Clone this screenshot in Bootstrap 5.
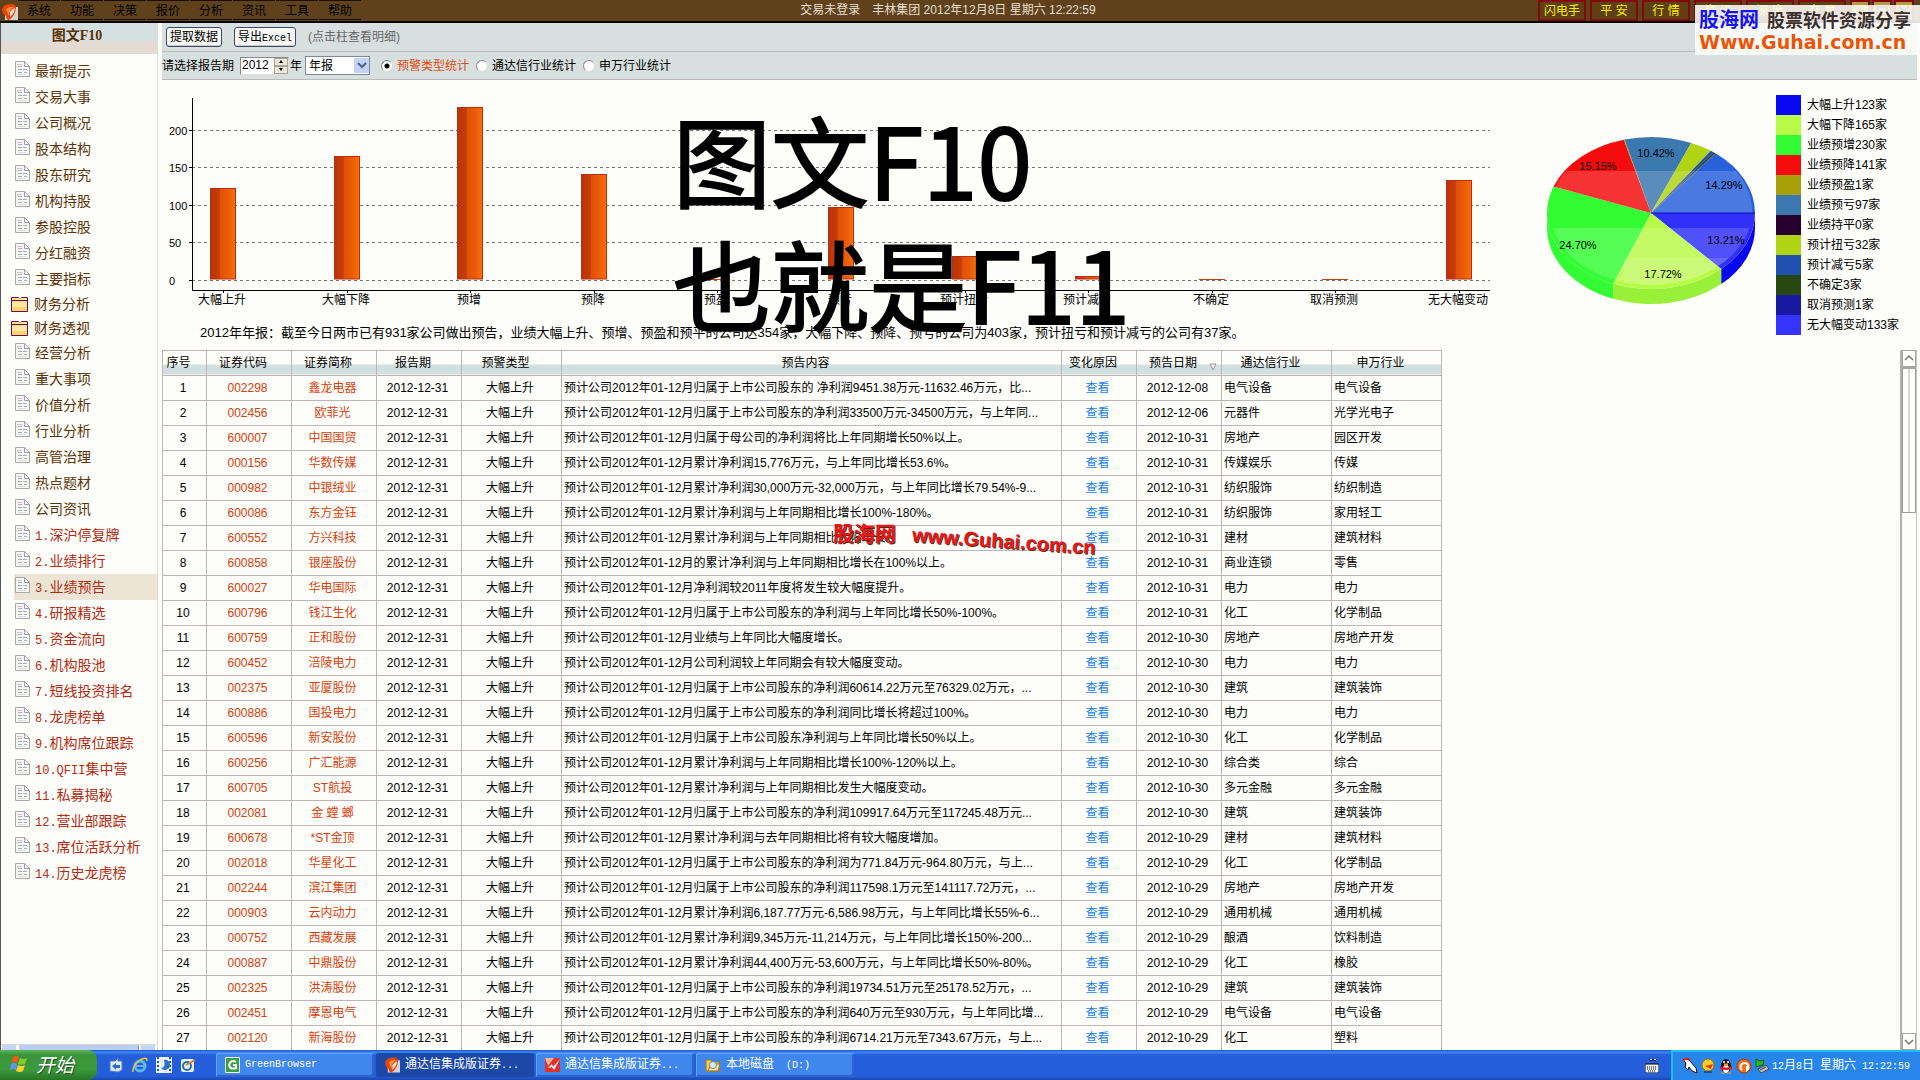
<!DOCTYPE html>
<html lang="zh-CN">
<head>
<meta charset="utf-8">
<meta name="viewport" content="width=device-width, initial-scale=1">
<title>图文F10</title>
<link href="https://cdn.jsdelivr.net/npm/bootstrap@5.3.0/dist/css/bootstrap.min.css" rel="stylesheet">
<style>
:root{--paper:#fdfdf9;--rule:#bfb4b4;--bar:#d7e0de;--brown:#5c3408;--link:#d8400c}
body{font:12px/16px "Liberation Sans","Noto Sans CJK SC",sans-serif;color:#000;background:var(--paper);height:100vh;overflow:hidden}
a{text-decoration:none}
.mono{font-family:"Liberation Mono",monospace;font-size:10px}
/* title bar */
.titlebar{height:23px;background:#5f421c;border-bottom:2px solid #05050c;position:relative;flex:none}
.menu-item{color:#000;border-top:1px solid #1a0e02;border-bottom:1px solid #1a0e02;width:42px;margin-right:1px;height:20px;line-height:20px;text-align:center}
.clockline{color:#e8dfd2;left:0;right:0;top:0;line-height:20px;padding-right:24px}
.tbtn{width:48px;height:21px;border:2px solid #84080a;background:#5f3f14;color:#f8f000;padding:0;line-height:16px;font-size:12px}
.wbtns{gap:2px;margin-right:6px}
.wbtn{width:20px;height:21px;border:2px solid #84080a;background:#b99a3c;padding:0}
/* sidebar */
.side{width:158px;border-left:1px solid #555;border-right:1px solid #e0dcd6;flex:none}
.side-head{height:31px;background:linear-gradient(#d5e0e0 0 18px,#e4dbd5 18px);font:bold 14px/25px "Liberation Serif","Noto Sans CJK SC",serif;color:#5c3000;padding-right:4px}
.nav-row{height:26px;padding-left:14px;gap:4px;color:var(--brown);font-size:14px;line-height:20px}
.nav-row svg{margin-bottom:4px;flex:none}
.nav-row.fold{height:24px;padding-left:10px;gap:6px}
.nav-row.fold svg{margin-bottom:0}
.nav-row.pick{color:#b42a12;padding-top:1px}
.nav-row.pick .mono{font-size:12px}
.nav-row.on{background:#ece5d5;margin-left:13px;padding-left:1px}
.hscroll{height:6px;border-top:1px solid #ddd6cc;margin-right:1px;padding:0 1px}
.hs-btn{width:14px;height:5px;background:#c5d5f8}
.hs-thumb{width:120px;height:5px;background:#b9cdfa;border-right:1px solid #7f97d0}
/* tool rows */
.pane{margin-left:4px;margin-right:3px;min-width:0}
.tool{background:var(--bar);border-bottom:1px solid #b9b9b6}
.tool-a{height:29px;gap:12px;padding-top:1px}
.tool-b{height:28px;padding-top:1px}
.xp{height:20px;border:1px solid #3c4a64;border-radius:3px;background:#f7f8f6;padding:0 3px;line-height:18px;box-shadow:inset 0 -1px 0 #c9c9c9;color:#000}
.spin{width:49px;height:18px;margin:0 1px 0 6px;border:1px solid #888;border-bottom-color:#ddd;border-right-color:#ddd;background:#fff}
.spin input{width:33px;border:0;padding:0 0 0 1px;height:14px;font-size:12px;background:none;appearance:textfield;-moz-appearance:textfield}
.spin input::-webkit-inner-spin-button{display:none}
.spin button{height:8px;width:14px;padding:0;border:1px solid #a8a598;background:#ece9d8;line-height:0;display:flex;align-items:center;justify-content:center}
.pick-year{position:relative;width:65px;height:19px;margin-right:4px}
.pick-year select{appearance:none;width:65px;height:19px;border:1px solid #7d8898;background:#fff;font-size:12px;line-height:16px;padding:0 3px;border-radius:0}
.pick-year svg{position:absolute;right:1px;top:2px;pointer-events:none}
.rad{appearance:none;width:12px;height:12px;border-radius:50%;border:1px solid #8c8c88;background:#fff;margin:0 4px 0 7px;border-right-color:#ddd;border-bottom-color:#ddd}
.rad:checked{background:radial-gradient(circle,#000 0 2px,#fff 3px)}
/* charts */
.charts{height:270px;position:relative}
.summary{font-size:13px;line-height:26px;padding-left:38px;white-space:nowrap}
.pie{width:220px;margin-left:46px;margin-top:46px;flex:none}
.legend{list-style:none;margin:15px 0 0 10px;padding:0}
.legend li{height:20px;gap:6px;white-space:nowrap}
.legend i{width:25px;height:20px}
.slogan{position:absolute;left:511px;top:15px;font:400 98px/124px "Noto Sans CJK SC",sans-serif;-webkit-text-stroke:2px #000;pointer-events:none;white-space:nowrap}
svg text{font-family:"Liberation Sans","Noto Sans CJK SC",sans-serif}
/* table */
.grid{table-layout:fixed;width:1280px;border-collapse:collapse;flex:none;align-self:flex-start}
.grid th,.grid td{border:1px solid var(--rule);padding:0 3px 0 2px;height:25px;line-height:18px;overflow:hidden;white-space:nowrap;font-weight:400}
.grid th{text-align:center;padding-right:14px;background:linear-gradient(transparent 0 14px,#d3e0e0 14px);line-height:16px;overflow:visible}
.grid td.c{text-align:center;padding-right:5px}
.grid .red{color:var(--link)}
.grid .look{color:#1c82e6}
.vscroll{width:17px;border-left:2px solid #b5b0b0;border-right:1px solid #c9c4c4}
.vscroll button{height:17px;border:1px solid #a5a5a5;background:var(--paper);padding:0;line-height:0;width:100%}
.vthumb{height:146px;border:1px solid #9c9e9e;border-top:2px solid #a5a5a5}
.vthumb::before{content:"";display:block;width:2px;height:100%;margin:0 auto;background:#d5dad8}
/* watermarks */
.stamp{position:absolute;right:0;top:5px;width:225px;height:50px;background:rgba(253,253,250,.88);z-index:5;padding:2px 0 0 4px}
.stamp .cn1{font:bold 20px/24px "Noto Sans CJK SC",sans-serif;color:#1414f0}
.stamp .cn2{font:bold 18px/24px "Noto Sans CJK SC",sans-serif;color:#3a2f2c}
.stamp .url{font:bold 19px/22px "DejaVu Sans",sans-serif;color:#ec5408;white-space:nowrap}
.mark2{position:absolute;left:833px;top:521px;color:#f01414;text-shadow:1px 1px 0 #432;font:bold 21px/26px "Liberation Sans","Noto Sans CJK SC",sans-serif;white-space:nowrap;z-index:4;pointer-events:none}
.mark2 .w{transform:rotate(4deg);margin:7px 0 0 16px;font-size:20px}
/* taskbar */
.taskbar{height:30px;flex:none;background:linear-gradient(#2460d8 0 1px,#3f8cf0 2px,#245edb 5px,#245edb 26px,#1b48b0);color:#fff;position:relative;z-index:6}
.start{width:97px;height:30px;border:0;border-radius:0 9px 9px 0;background:linear-gradient(#5cb45c,#3a943a 5px,#3b9a3b 20px,#267526);color:#fff;font:italic 19px/26px "Noto Sans CJK SC",sans-serif;padding:0 0 2px 10px;gap:8px;text-shadow:1px 1px 1px #1c4a1c}
.quick{gap:8px;margin-left:11px;width:108px}
.task{width:158px;height:24px;margin:3px 2px 0 0;border:0;border-radius:2px;background:#3f87ee;color:#fff;padding:0 9px;gap:5px;text-align:left;box-shadow:inset 1px 1px 0 #66a4f8,inset -2px -2px 1px #2e62cc;line-height:20px;font-size:12px;white-space:nowrap}
.task.on{background:#1c48a8;box-shadow:none}
.tray{width:249px;background:#2886ea;border-left:2px solid #1ec0f4;border-top:2px solid #1ec0f4;padding-left:9px;gap:2px}
</style>
<script src="https://cdn.jsdelivr.net/npm/bootstrap@5.3.0/dist/js/bootstrap.bundle.min.js"></script>
</head>
<body class="d-flex flex-column">
<svg width="0" height="0" class="position-absolute" aria-hidden="true">
  <symbol id="doc" viewBox="0 0 16 17"><path d="M.5.5h9l5 5v10H.5z" fill="#f6f6f4" stroke="#a8a8a6"/><path d="M9.500.5v5h5" fill="none" stroke="#9d9db8"/><path d="M3 5.500h4M3 8.500h4M8 8.500h4M3 11.500h4M9 11.500h3" stroke="#a4aeb0" fill="none"/><path d="M2 3.500h5" stroke="#dcbcbc"/><path d="M3 13.500h8" stroke="#d8e4e4"/></symbol>
  <symbol id="folder" viewBox="0 0 17 16"><path d="M.5 1.500h7l1 1h1l1-1h6v14H.5z" fill="#f7d866" stroke="#6c0a62"/><path d="M1 4.500h15" stroke="#6c0a62"/><path d="M1 3h15" stroke="#fff6c0"/><path d="M1 6h15v5H1z" fill="#fbe9a0"/></symbol>
  <symbol id="tdx" viewBox="0 0 16 16"><rect x="3" y="3" width="13" height="13" fill="#d9d5cf"/><path d="M0 5Q2 0 9 0q5 0 5 4-1 8-7 12-3 0-3-4Q0 10 0 5z" fill="#e8440e"/><path d="M4 5q4-3 8-2-5 2-5 9-2-4-3-7z" fill="#ff9038"/><path d="M8 8q2-3 5-4-1 6-5 9z" fill="#fff" opacity=".85"/></symbol>
</svg>

<header class="titlebar d-flex">
  <div class="d-flex pt-1" style="padding-left:2px"><svg width="16" height="16"><use href="#tdx"/></svg></div>
  <nav class="d-flex" id="menu"></nav>
  <div class="clockline position-absolute text-center">交易未登录&emsp;丰林集团 2012年12月8日 星期六 12:22:59</div>
  <div class="d-flex gap-1 ms-auto position-relative" id="topbtns"></div>
</header>
<aside class="stamp">
  <div class="d-flex gap-2"><span class="cn1">股海网</span><span class="cn2">股票软件资源分享</span></div>
  <div class="url">Www.Guhai.com.cn</div>
</aside>

<div class="d-flex flex-fill" style="min-height:0">
  <aside class="side d-flex flex-column">
    <div class="side-head text-center">图文F10</div>
    <nav id="side" class="pt-1"></nav>
    <div class="hscroll d-flex mt-auto justify-content-between"><span class="hs-btn"></span><span class="hs-thumb"></span><span class="hs-btn"></span></div>
  </aside>

  <main class="pane flex-fill d-flex flex-column">
    <div class="tool tool-a d-flex align-items-center px-1">
      <button type="button" class="xp">提取数据</button>
      <button type="button" class="xp">导出<span class="mono">Excel</span></button>
      <span style="color:#666">(点击柱查看明细)</span>
    </div>
    <form class="tool tool-b d-flex align-items-center">
      <label for="yr">请选择报告期</label>
      <span class="spin d-flex"><input id="yr" type="number" value="2012"><span><button type="button" aria-label="增加"><svg width="4" height="3"><path d="M0 3 2 0l2 3z"/></svg></button><button type="button" aria-label="减少"><svg width="4" height="3"><path d="M0 0l2 3 2-3z"/></svg></button></span></span>
      <label for="kind" style="margin-right:3px">年</label>
      <span class="pick-year"><select id="kind"><option>年报</option></select><svg width="15" height="15"><rect width="15" height="15" rx="1" fill="#c2d3fa"/><path d="M4 5l4 4 4-4" fill="none" stroke="#4d6185" stroke-width="2"/></svg></span>
      <input class="rad" type="radio" name="s" id="r1" checked><label for="r1" style="color:#e04a10">预警类型统计</label>
      <input class="rad" type="radio" name="s" id="r2"><label for="r2">通达信行业统计</label>
      <input class="rad" type="radio" name="s" id="r3"><label for="r3">申万行业统计</label>
    </form>

    <section class="charts d-flex flex-shrink-0">
      <div>
        <svg id="bars" width="1338" height="240" class="d-block" font-size="12"></svg>
        <div class="summary">2012年年报：截至今日两市已有931家公司做出预告，业绩大幅上升、预增、预盈和预平的公司达354家，大幅下降、预降、预亏的公司为403家，预计扭亏和预计减亏的公司有37家。</div>
      </div>
      <svg id="pie" class="pie" width="220" height="190" font-size="11" text-anchor="middle"></svg>
      <ul class="legend" id="legend"></ul>
      <div class="slogan">图文F10<br>也就是F11</div>
    </section>

    <section class="d-flex flex-fill justify-content-between overflow-hidden" style="min-height:0">
      <table class="grid">
        <colgroup><col style="width:44px"><col style="width:85px"><col style="width:85px"><col style="width:85px"><col style="width:100px"><col style="width:500px"><col style="width:75px"><col style="width:85px"><col style="width:110px"><col style="width:110px"></colgroup>
        <thead><tr><th>序号</th><th>证券代码</th><th>证券简称</th><th>报告期</th><th>预警类型</th><th>预告内容</th><th>变化原因</th><th class="position-relative">预告日期<svg class="position-absolute end-0 bottom-0 mb-1 me-1" width="8" height="8"><path d="M1 1h6L4 7z" fill="#eee" stroke="#999"/></svg></th><th>通达信行业</th><th>申万行业</th></tr></thead>
        <tbody id="rows"></tbody>
      </table>
      <div class="vscroll d-flex flex-column">
        <button type="button" aria-label="向上"><svg width="10" height="8"><path d="M1 6l4-4 4 4" fill="none" stroke="#777" stroke-width="1.5"/></svg></button>
        <div class="vthumb"></div>
        <button type="button" class="mt-auto" aria-label="向下"><svg width="10" height="8"><path d="M1 2l4 4 4-4" fill="none" stroke="#777" stroke-width="1.5"/></svg></button>
      </div>
    </section>
  </main>
</div>
<div class="mark2 d-flex"><span>股海网</span><span class="w">www.Guhai.com.cn</span></div>

<footer class="taskbar d-flex">
  <button type="button" class="start d-flex align-items-center"><svg width="18" height="18" viewBox="0 0 18 18"><path d="M3 2q3-2 6 0L7 8Q4 6 1 8z" fill="#f0581c"/><path d="M10 3q3 2 7 0l-2 6q-4 1-7 0z" fill="#84cc2c"/><path d="M1 9q3-2 6 0l-1 6q-3-2-6 0z" fill="#5a94f4"/><path d="M8 10q4 2 7 0l-2 6q-3 2-7 0z" fill="#fcd02c"/></svg>开始</button>
  <div class="quick d-flex align-items-center">
    <svg width="16" height="16"><path d="M2 4h5l3-3v3h4v9l-4 2-8-1z" fill="#dce9f8" stroke="#4f7fb8"/><path d="M4 9l4-3v2h4v3H8v2z" fill="#2f6cc0"/></svg>
    <svg width="16" height="16"><circle cx="8" cy="9" r="5" fill="none" stroke="#5cb8f8" stroke-width="3"/><path d="M4 9h9" stroke="#5cb8f8" stroke-width="2"/><path d="M1 15Q0 9 8 3q7-4 7 1" fill="none" stroke="#f4c430" stroke-width="1.5"/></svg>
    <svg width="16" height="16"><rect width="16" height="16" fill="#e8f0fa"/><path d="M2 0v16M14 0v16" stroke="#27549c" stroke-width="2" stroke-dasharray="2 2"/><path d="M8 3a5 5 0 1 1-3 8q5 0 3-8z" fill="#2d70cc"/></svg>
    <svg width="16" height="16"><rect x="1" y="2" width="13" height="13" rx="2" fill="#e8f2fb"/><circle cx="7" cy="9" r="4" fill="none" stroke="#2470b8" stroke-width="2"/><path d="M6 8l9-5" stroke="#e87820" stroke-width="2"/></svg>
  </div>
  <button type="button" class="task d-flex align-items-center"><svg width="15" height="16"><rect width="15" height="16" rx="1" fill="#eef8ee"/><rect x="1" y="1" width="13" height="14" fill="#3ca048"/><path d="M11 5Q6 2 4 8q1 5 7 3V8H8" fill="none" stroke="#fff" stroke-width="2"/></svg><span class="mono">GreenBrowser</span></button>
  <button type="button" class="task on d-flex align-items-center"><svg width="15" height="16"><use href="#tdx"/></svg><span>通达信集成版证券<span class="mono">...</span></span></button>
  <button type="button" class="task d-flex align-items-center"><svg width="15" height="16"><rect y="1" width="15" height="14" fill="#e03028"/><path d="M0 1h9L3 9z" fill="#ffb0a0"/><path d="M3 11l4-4 1 3 7-8-6 11-2-3z" fill="#fff"/></svg><span>通达信集成版证券<span class="mono">...</span></span></button>
  <button type="button" class="task d-flex align-items-center"><svg width="16" height="16"><path d="M1 3h5l1 2h7v9H1z" fill="#f4cc50" stroke="#a07818"/><path d="M3 14l3-7h9l-2 7z" fill="#fbe48c" stroke="#a07818"/><circle cx="8" cy="8" r="3.5" fill="#d8ecfa" stroke="#789"/></svg><span>本地磁盘<span class="mono">&nbsp; (D:)</span></span></button>
  <div class="ms-auto d-flex align-items-center" style="padding-right:12px"><svg width="14" height="15"><path d="M4 1l2 2 2-2 2 2 2-2M0 6h14v9H0z" fill="#eee" stroke="#000"/><path d="M2 9h10M2 11h10M3 13h8" stroke="#000" stroke-dasharray="1 1"/></svg></div>
  <div class="tray d-flex align-items-center">
    <svg width="16" height="16"><path d="M1 2q3-3 6 0l7 8 1 5-5-2-3-4-1 3-3-3 1-4z" fill="#fff" stroke="#111"/><path d="M1 3Q4-1 8 2" fill="none" stroke="#e01818" stroke-width="2"/></svg>
    <svg width="16" height="16"><circle cx="8" cy="7" r="6" fill="#fcd02c" stroke="#a86808"/><path d="M5 8l8-2-2 5z" fill="#e83a10"/><path d="M4 14h8" stroke="#1850a0" stroke-width="2"/></svg>
    <svg width="16" height="16"><ellipse cx="8" cy="8" rx="5" ry="7" fill="#181818"/><ellipse cx="8" cy="11" rx="3" ry="4" fill="#fff"/><path d="M2 8q6 3 12 0v3q-6 2-12 0z" fill="#e01818"/><circle cx="6" cy="4" r="1" fill="#fff"/><circle cx="10" cy="4" r="1" fill="#fff"/><path d="M6 6h4l-2 2zM3 15h4M9 15h4" fill="#fca020" stroke="#fca020"/></svg>
    <svg width="16" height="16"><circle cx="8" cy="8" r="7" fill="#f0701c" stroke="#a83808"/><path d="M6 12a4 4 0 1 1 5 0V8" fill="none" stroke="#fff" stroke-width="2"/></svg>
    <svg width="16" height="16"><path d="M2 1l4 2 4-1-1 5-4 1-3 1z" fill="#28b828" stroke="#086008"/><path d="M4 11l8-4 3 4-8 4z" fill="#c0c4c8" stroke="#444"/><path d="M6 12l6-3" stroke="#333"/></svg>
    <span class="text-nowrap"><span class="mono">12</span>月<span class="mono">8</span>日<span class="mono"> </span>星期六<span class="mono"> 12:22:59</span></span>
  </div>
</footer>

<script>
const $=id=>document.getElementById(id);
$('menu').innerHTML=['系统','功能','决策','报价','分析','资讯','工具','帮助'].map(t=>`<a href="#" class="menu-item">${t}</a>`).join('');
$('topbtns').innerHTML=['闪电手','平 安','行 情','资 讯','深 度','交 易'].map(t=>`<button type="button" class="tbtn">${t}</button>`).join('')
 +'<div class="wbtns d-flex">'+['M3 12h8','M3 4h10v8H3z','M3 3l10 10M13 3L3 13'].map(d=>`<button type="button" class="wbtn" aria-label="窗口"><svg width="16" height="15" class="d-block"><path d="${d}" fill="none" stroke="#222" stroke-width="2"/></svg></button>`).join('')+'</div>';
/* side navigation */
const docs=['最新提示','交易大事','公司概况','股本结构','股东研究','机构持股','参股控股','分红融资','主要指标','*财务分析','*财务透视','经营分析','重大事项','价值分析','行业分析','高管治理','热点题材','公司资讯','1.深沪停复牌','2.业绩排行','3.业绩预告','4.研报精选','5.资金流向','6.机构股池','7.短线投资排名','8.龙虎榜单','9.机构席位跟踪','10.QFII集中营','11.私募揭秘','12.营业部跟踪','13.席位活跃分析','14.历史龙虎榜'];
$('side').innerHTML=docs.map(t=>{
 const f=t[0]=='*',n=/^\d/.test(t);
 return `<a href="#" class="nav-row d-flex align-items-center${f?' fold':''}${n?' pick':''}${t[0]=='3'?' on':''}"><svg width="${f?17:16}" height="${f?16:17}"><use href="#${f?'folder':'doc'}"/></svg><span>${(f?t.slice(1):t).replace(/^[\d.QFI]+/,m=>`<span class="mono">${m}</span>`)}</span></a>`}).join('');
/* bar chart */
const kinds=['大幅上升','大幅下降','预增','预降','预盈','预亏','预计扭亏','预计减亏','不确定','取消预测','无大幅变动'],vals=[123,165,230,141,1,97,32,5,3,1,133];
let b='<defs><linearGradient id="g"><stop offset="0" stop-color="#b83408"/><stop offset=".35" stop-color="#c83c08"/><stop offset=".4" stop-color="#e05008"/><stop offset=".7" stop-color="#ea5c08"/><stop offset="1" stop-color="#fb6e08"/></linearGradient></defs>';
const y=v=>Math.round(200-v*.752)+.5;
[0,50,100,150,200].forEach(v=>b+=`<path d="M30 ${y(v)}H1328" stroke="#777" stroke-dasharray="3 3"/><path d="M27 ${y(v)}h4" stroke="#000"/><text x="7" y="${y(v)+4}" font-size="11">${v}</text>`);
vals.forEach((v,i)=>{const c=61+i*123.6,x=Math.round(c-13),h=199-y(v)+.5;b+=(h>1?`<rect x="${x+.5}" y="${y(v)}" width="25" height="${h-.5}" fill="url(#g)" stroke="#b83010"/>`:`<rect x="${x}" y="199" width="26" height="1" fill="#c83c10"/>`)+`<path d="M${Math.round(c)+.5} 210v3" stroke="#000"/><text x="${Math.round(c)-1}" y="224" text-anchor="middle">${kinds[i]}</text>`});
b+='<path d="M30.5 18V210.5H1328" fill="none" stroke="#000"/>';
$('bars').innerHTML=b;
/* pie */
const P=[[123,'#3030f8','大幅上升'],[165,'#b8fa48','大幅下降'],[230,'#34fc34','业绩预增'],[141,'#f40c0c','业绩预降'],[1,'#a8a008','业绩预盈'],[97,'#3c78b0','业绩预亏'],[0,'#280030','业绩持平'],[32,'#b0d414','预计扭亏'],[5,'#2050b0','预计减亏'],[3,'#284810','不确定'],[1,'#1818a0','取消预测'],[133,'#2860dc','无大幅变动']];
const cx=105,cy=87,rx=104,ry=76,T=931,pt=(a,d=0)=>[cx+rx*Math.cos(a),cy+d+ry*Math.sin(a)].map(n=>n.toFixed(1)).join(' ');
let a=0,s='',side='';
P.forEach(([v,c],i)=>{if(!v)return;const e=a+v/T*2*Math.PI,big=e-a>Math.PI?1:0;
 if(a<Math.PI){const q=Math.min(e,Math.PI);side+=`<path d="M${pt(a)}A${rx} ${ry} 0 0 1 ${pt(q)}L${pt(q,15)}A${rx} ${ry} 0 0 0 ${pt(a,15)}Z" fill="${['#0808f0','#98f038','#34fc34'][i]}"/>`}
 s+=`<path d="M${cx} ${cy}L${pt(a)}A${rx} ${ry} 0 ${big} 1 ${pt(e)}Z" fill="${c}"/>`;a=e});
s+=`<clipPath id="hi"><path d="M0 45H220V87H105L8 61V45zM0 102H220V190H0z"/></clipPath><clipPath id="lo"><path d="M78 132H220V190H78z"/></clipPath><ellipse cx="${cx}" cy="${cy-2}" rx="101" ry="74" fill="#fff" opacity=".16" clip-path="url(#hi)"/><ellipse cx="${cx}" cy="${cy-2}" rx="101" ry="74" fill="#fff" opacity=".12" clip-path="url(#lo)"/><path d="M${cx} ${cy}h${rx}" stroke="#1010c0"/>`;
[['15.15%',52,44],['10.42%',110,31],['14.29%',178,63],['24.70%',32,123],['13.21%',180,118],['17.72%',117,152]].forEach(([t,x,yy])=>s+=`<text x="${x}" y="${yy}">${t}</text>`);
$('pie').innerHTML=side+s;
$('legend').innerHTML=P.map(([v,c,t],i)=>`<li class="d-flex align-items-center"><i style="background:${i==0?'#0808f4':i==11?'#3434fc':c}"></i>${t}${v}家</li>`).join('');
/* forecast table: code|name|text|date|sector|industry */
const G='归属于上市公司股东的净利润',L='累计净利润';
const R=`002298|鑫龙电器|归属于上市公司股东的 净利润9451.38万元-11632.46万元，比...|12-08|电气设备|电气设备
002456|欧菲光|${G}33500万元-34500万元，与上年同...|12-06|元器件|光学光电子
600007|中国国贸|归属于母公司的净利润将比上年同期增长50%以上。|10-31|房地产|园区开发
000156|华数传媒|${L}15,776万元，与上年同比增长53.6%。|10-31|传媒娱乐|传媒
000982|中银绒业|${L}30,000万元-32,000万元，与上年同比增长79.54%-9...|10-31|纺织服饰|纺织制造
600086|东方金钰|${L}与上年同期相比增长100%-180%。|10-31|纺织服饰|家用轻工
600552|方兴科技|${L}与上年同期相比大幅增长。|10-31|建材|建筑材料
600858|银座股份|的${L}与上年同期相比增长在100%以上。|10-31|商业连锁|零售
600027|华电国际|净利润较2011年度将发生较大幅度提升。|10-31|电力|电力
600796|钱江生化|${G}与上年同比增长50%-100%。|10-31|化工|化学制品
600759|正和股份|业绩与上年同比大幅度增长。|10-30|房地产|房地产开发
600452|涪陵电力|公司利润较上年同期会有较大幅度变动。|10-30|电力|电力
002375|亚厦股份|${G}60614.22万元至76329.02万元，...|10-30|建筑|建筑装饰
600886|国投电力|${G}同比增长将超过100%。|10-30|电力|电力
600596|新安股份|归属于上市公司股东净利润与上年同比增长50%以上。|10-30|化工|化学制品
600256|广汇能源|${L}与上年同期相比增长100%-120%以上。|10-30|综合类|综合
600705|ST航投|${L}与上年同期相比发生大幅度变动。|10-30|多元金融|多元金融
002081|金 螳 螂|${G}109917.64万元至117245.48万元...|10-30|建筑|建筑装饰
600678|*ST金顶|${L}与去年同期相比将有较大幅度增加。|10-29|建材|建筑材料
002018|华星化工|${G}为771.84万元-964.80万元，与上...|10-29|化工|化学制品
002244|滨江集团|${G}117598.1万元至141117.72万元，...|10-29|房地产|房地产开发
000903|云内动力|${L}6,187.77万元-6,586.98万元，与上年同比增长55%-6...|10-29|通用机械|通用机械
000752|西藏发展|${L}9,345万元-11,214万元，与上年同比增长150%-200...|10-29|酿酒|饮料制造
000887|中鼎股份|${L}44,400万元-53,600万元，与上年同比增长50%-80%。|10-29|化工|橡胶
002325|洪涛股份|${G}19734.51万元至25178.52万元，...|10-29|建筑|建筑装饰
002451|摩恩电气|${G}640万元至930万元，与上年同比增...|10-29|电气设备|电气设备
002120|新海股份|${G}6714.21万元至7343.67万元，与上...|10-29|化工|塑料`;
$('rows').innerHTML=R.split('\n').map((r,i)=>{const [c,n,t,d,p,q]=r.split('|');
 return `<tr><td class="c">${i+1}</td><td class="c"><a href="#" class="red">${c}</a></td><td class="c"><a href="#" class="red">${n}</a></td><td class="c">2012-12-31</td><td class="c">大幅上升</td><td>预计公司2012年01-12月${t}</td><td class="c"><a href="#" class="look">查看</a></td><td class="c">2012-${d}</td><td>${p}</td><td>${q}</td></tr>`}).join('');
</script>
</body>
</html>
